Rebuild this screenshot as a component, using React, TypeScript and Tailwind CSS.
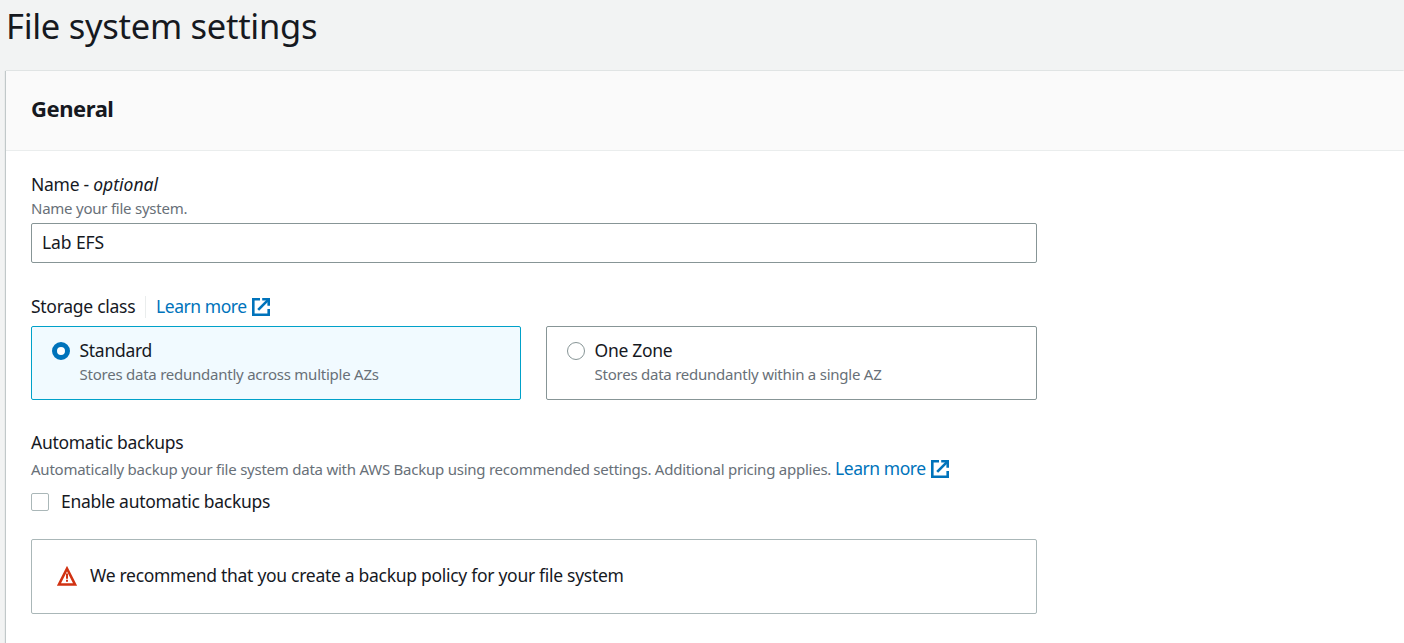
import type { ReactNode } from "react";

function ExternalIcon() {
  return (
    <svg viewBox="0 0 18 18" className="h-[18px] w-[18px] shrink-0" fill="none" stroke="#0073bb" strokeWidth="2.6">
      <path d="M8 1.3H1.3V16.7H16.7V11" />
      <path d="M10.2 1.3H16.7V7.8" />
      <path d="M16.4 1.6L6.2 11.8" />
    </svg>
  );
}

function LearnMore() {
  return (
    <a href="#" className="flex h-[22px] items-center gap-[5px] tracking-[-0.45px] text-[#0073bb]">
      <span className="h-[22px]">Learn more</span>
      <ExternalIcon />
    </a>
  );
}

function WarningIcon() {
  return (
    <svg viewBox="0 0 20 20" className="h-5 w-5 shrink-0" fill="none" stroke="#d13212" strokeWidth="2.5">
      <path d="M10 2.6L18 18.4H2Z" strokeLinejoin="miter" />
      <path d="M10 7.5V12.7" strokeWidth="2" />
      <path d="M10 13.8V15.8" strokeWidth="2" />
    </svg>
  );
}

function Hint({ children }: { children: ReactNode }) {
  return <p className="text-[15px] leading-5 tracking-[-0.24px] whitespace-nowrap text-[#687078]">{children}</p>;
}

function Tile({ title, text, selected }: { title: string; text: string; selected?: boolean }) {
  return (
    <div
      className={
        selected
          ? "flex h-[74px] w-[490px] gap-2.5 rounded-xs border border-[#00a1c9] bg-[#f1faff] pt-[13px] pl-5"
          : "flex h-[74px] w-[491px] gap-2.5 rounded-xs border border-[#879596] bg-white pt-[13px] pl-5"
      }
    >
      <span
        className={
          selected
            ? "mt-[2px] h-[18px] w-[18px] shrink-0 rounded-full border-[5px] border-[#0073bb] bg-white"
            : "mt-[2px] h-[18px] w-[18px] shrink-0 rounded-full border border-[#879596] bg-white"
        }
      />
      <div className="-ml-[0.5px]">
        <p className="h-[22px]">{title}</p>
        <div className="mt-[2px]">
          <Hint>{text}</Hint>
        </div>
      </div>
    </div>
  );
}

export default function App() {
  return (
    <div className="h-[643px] overflow-hidden bg-[#f2f3f3] pl-1.5 font-['Noto_Sans',sans-serif] text-[17.5px] leading-5 tracking-[-0.28px] whitespace-nowrap text-[#16191f]">
      <h1 className="h-[71px] pt-[4px] text-[34.5px] leading-[44px] tracking-[-0.28px]">File system settings</h1>
      <section className="h-[600px] bg-white shadow-[-1px_0_1px_rgba(0,28,36,0.2),0_-1px_0_#e8ebeb]">
        <header className="flex h-20 items-center border-b border-[#eaeded] bg-[#fafafa] pl-[25px]">
          <h2 className="-mt-1.5 text-[22px] leading-7 font-bold tracking-[-0.45px]">General</h2>
        </header>
        <div className="w-[1031px] pt-[23px] pl-[25px]">
          <p className="h-[22px]">
            Name - <em className="tracking-[0.02px]">optional</em>
          </p>
          <div className="mt-[2px]">
            <Hint>Name your file system.</Hint>
          </div>
          <div className="mt-[5px] flex h-10 items-center rounded-xs border border-[#879596] bg-white pb-0.5 pl-2.5 tracking-[-0.1px]">
            Lab EFS
          </div>

          <div className="mt-[33px] flex h-[22px] items-center">
            <span className="h-[22px] w-[105px]">Storage class</span>
            <span className="mr-2.5 ml-[9px] h-[22px] w-px bg-[#eaeded]" />
            <LearnMore />
          </div>
          <div className="mt-[8px] flex gap-[25px]">
            <Tile selected title="Standard" text="Stores data redundantly across multiple AZs" />
            <Tile title="One Zone" text="Stores data redundantly within a single AZ" />
          </div>

          <p className="mt-8 h-[22px]">Automatic backups</p>
          <div className="mt-[4px] flex h-[22px] items-center">
            <div className="w-[804px]">
              <Hint>
                Automatically backup your file system data with AWS Backup using recommended settings. Additional pricing applies.
              </Hint>
            </div>
            <LearnMore />
          </div>
          <div className="mt-[11px] flex h-[22px] items-center gap-3">
            <span className="h-[18px] w-[18px] rounded-xs border border-[#aab7b8] bg-white" />
            <span className="h-[22px]">Enable automatic backups</span>
          </div>

          <div className="mt-[26px] flex h-[75px] items-center gap-[13px] rounded-xs border border-[#aab7b8] pl-[25px]">
            <div className="-mt-0.5">
              <WarningIcon />
            </div>
            <p className="-mt-[3px] tracking-[-0.29px]">We recommend that you create a backup policy for your file system</p>
          </div>
        </div>
      </section>
    </div>
  );
}
